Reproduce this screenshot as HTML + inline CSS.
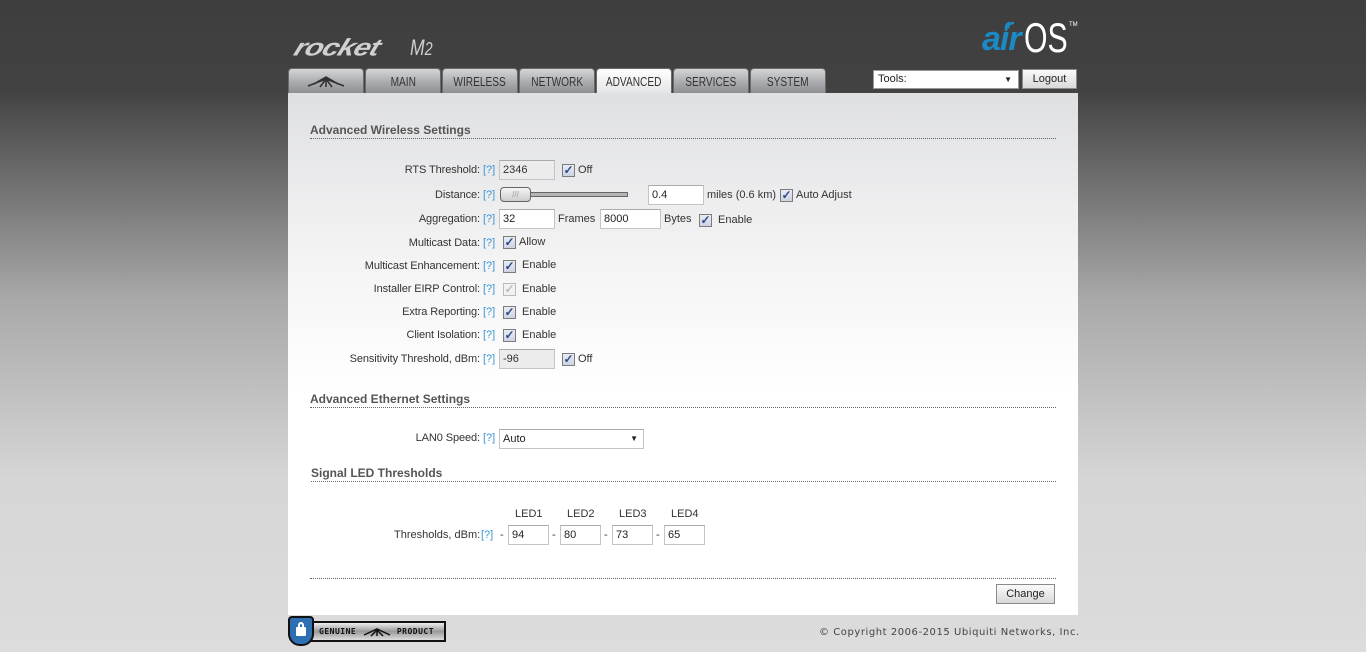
<!DOCTYPE html>
<html><head><meta charset="utf-8"><style>
*{margin:0;padding:0;box-sizing:border-box}
html,body{width:1366px;height:652px;overflow:hidden}
body{background:linear-gradient(#3e3e3e 0,#424242 90px,#a9a9a9 300px,#d6d6d6 480px,#dcdcdc 652px);font-family:"Liberation Sans",Arial,sans-serif;font-size:11px;color:#333;position:relative}
.a{position:absolute;white-space:nowrap}
.panel{position:absolute;left:288px;top:93px;width:790px;height:522px;background:linear-gradient(#dfe0e2 0,#f2f2f3 150px,#fff 300px,#fff)}
.tab{position:absolute;top:68px;height:25px;width:76px;border-radius:4px 4px 0 0;background:linear-gradient(#d4d5d7,#a7a8ab 60%,#8f9093);border:1px solid #6a6a6a;border-bottom:none;text-align:center;font-size:13px;line-height:25px;color:#333}
.tab span{display:inline-block;transform:scaleX(.78)}
.tab.on{background:linear-gradient(#fff,#e3e4e6);color:#333;height:26px}
.lbl{position:absolute;left:0;width:480px;text-align:right;color:#333;line-height:14px;letter-spacing:-.1px}
.q{position:absolute;left:483px;color:#3a95d3;line-height:14px}
.in{position:absolute;height:20px;border:1px solid #c4c4c4;border-top-color:#aaa;background:#fff;padding-left:3px;line-height:18px;color:#222}
.in.dis{background:#ececec;color:#333}
.cb{position:absolute;width:13px;height:13px;border:1px solid #7c7c7c;background:linear-gradient(#e9ecf4,#cdd3e3);color:#2d4a8a;font-size:12px;line-height:11px;text-align:center;font-weight:bold}
.cb.d{border-color:#bbb;background:#f2f2f2;color:#bbb}
.h{position:absolute;left:310px;width:746px;font-weight:bold;font-size:12px;color:#555;border-bottom:1px dotted #666;padding-bottom:1px;line-height:14px}
.t{position:absolute;line-height:14px;color:#333}
.btn{position:absolute;border:1px solid #8a8a8a;background:linear-gradient(#fafafa,#d9d9d9);text-align:center;color:#222}
</style></head><body>
<div class="a" style="left:290px;top:28px;font:italic bold 30px 'Liberation Sans',sans-serif;color:#d0d0d0;letter-spacing:-1px;transform:skewX(-20deg) scaleY(.8);transform-origin:left bottom">rocket</div>
<div class="a" style="left:410px;top:35px;font:italic 22px 'Liberation Sans',sans-serif;color:#cfcfcf;transform:scaleX(.8);transform-origin:left">M<span style="font-size:18px">2</span></div>
<div class="a" style="left:982px;top:20px;font:italic bold 34px 'Liberation Sans',sans-serif;color:#1b8ac4;letter-spacing:-1px">air</div>
<div class="a" style="left:1024px;top:14px;font:42px 'Liberation Sans',sans-serif;color:#fff;transform:scaleX(.72);transform-origin:left">OS</div>
<div class="a" style="left:1069px;top:22px;font-size:6px;color:#fff">TM</div>
<svg class="a" style="left:1004px;top:14px" width="20" height="20"><path d="M2 17 A8 8 0 0 1 10 9 M2 13 A4 4 0 0 1 6 9" stroke="#1b8ac4" stroke-width="2.5" fill="none"/></svg>
<div class="tab" style="left:288px"><svg width="40" height="14" style="margin-top:6px"><path d="M2 11 L20 4 L38 11 M8 9 L20 2 L32 9 M20 2 L20 12 M14 12 L20 4 L26 12" stroke="#333" stroke-width="1.6" fill="none"/></svg></div>
<div class="tab" style="left:365px"><span>MAIN</span></div>
<div class="tab" style="left:442px"><span>WIRELESS</span></div>
<div class="tab" style="left:519px"><span>NETWORK</span></div>
<div class="tab on" style="left:596px"><span>ADVANCED</span></div>
<div class="tab" style="left:673px"><span>SERVICES</span></div>
<div class="tab" style="left:750px"><span>SYSTEM</span></div>
<div class="a" style="left:873px;top:70px;width:146px;height:19px;background:#fff;border:1px solid #999;padding-left:4px;line-height:17px;color:#222">Tools:<span style="position:absolute;right:6px;top:0;font-size:8px">▼</span></div>
<div class="btn" style="left:1022px;top:69px;width:55px;height:20px;line-height:18px">Logout</div>
<div class="panel"></div>
<div class="h" style="top:123px">Advanced Wireless Settings</div>

<div class="lbl" style="top:163px">RTS Threshold:</div><div class="q" style="top:163px">[?]</div>
<div class="in dis" style="left:499px;top:160px;width:56px">2346</div>
<div class="cb" style="left:562px;top:164px">✓</div><div class="t" style="left:578px;top:163px">Off</div>

<div class="lbl" style="top:188px">Distance:</div><div class="q" style="top:188px">[?]</div>
<div class="a" style="left:528px;top:192px;width:100px;height:5px;background:#b5b5b5;border:1px solid #666"></div>
<div class="a" style="left:500px;top:187px;width:31px;height:15px;border:1px solid #666;border-radius:4px;background:linear-gradient(#f5f5f5,#ccc);font-size:8px;color:#999;text-align:center;line-height:13px">///</div>
<div class="in" style="left:648px;top:185px;width:56px">0.4</div>
<div class="t" style="left:707px;top:188px">miles (0.6 km)</div>
<div class="cb" style="left:780px;top:189px">✓</div><div class="t" style="left:796px;top:188px">Auto Adjust</div>

<div class="lbl" style="top:212px">Aggregation:</div><div class="q" style="top:212px">[?]</div>
<div class="in" style="left:499px;top:209px;width:56px">32</div>
<div class="t" style="left:558px;top:212px">Frames</div>
<div class="in" style="left:600px;top:209px;width:61px">8000</div>
<div class="t" style="left:664px;top:212px">Bytes</div>
<div class="cb" style="left:699px;top:214px">✓</div><div class="t" style="left:718px;top:213px">Enable</div>

<div class="lbl" style="top:236px">Multicast Data:</div><div class="q" style="top:236px">[?]</div>
<div class="cb" style="left:503px;top:236px">✓</div><div class="t" style="left:519px;top:235px">Allow</div>

<div class="lbl" style="top:259px">Multicast Enhancement:</div><div class="q" style="top:259px">[?]</div>
<div class="cb" style="left:503px;top:260px">✓</div><div class="t" style="left:522px;top:258px">Enable</div>

<div class="lbl" style="top:282px">Installer EIRP Control:</div><div class="q" style="top:282px">[?]</div>
<div class="cb d" style="left:503px;top:283px">✓</div><div class="t" style="left:522px;top:282px">Enable</div>

<div class="lbl" style="top:305px">Extra Reporting:</div><div class="q" style="top:305px">[?]</div>
<div class="cb" style="left:503px;top:306px">✓</div><div class="t" style="left:522px;top:305px">Enable</div>

<div class="lbl" style="top:328px">Client Isolation:</div><div class="q" style="top:328px">[?]</div>
<div class="cb" style="left:503px;top:329px">✓</div><div class="t" style="left:522px;top:328px">Enable</div>

<div class="lbl" style="top:352px">Sensitivity Threshold, dBm:</div><div class="q" style="top:352px">[?]</div>
<div class="in dis" style="left:499px;top:349px;width:56px">-96</div>
<div class="cb" style="left:562px;top:353px">✓</div><div class="t" style="left:578px;top:352px">Off</div>

<div class="h" style="top:392px">Advanced Ethernet Settings</div>
<div class="lbl" style="top:431px">LAN0 Speed:</div><div class="q" style="top:431px">[?]</div>
<div class="in" style="left:499px;top:429px;width:145px">Auto<span style="position:absolute;right:5px;top:0;font-size:8px">▼</span></div>

<div class="h" style="top:466px;left:311px;width:745px">Signal LED Thresholds</div>
<div class="t" style="left:515px;top:507px">LED1</div>
<div class="t" style="left:567px;top:507px">LED2</div>
<div class="t" style="left:619px;top:507px">LED3</div>
<div class="t" style="left:671px;top:507px">LED4</div>
<div class="t" style="left:394px;top:528px">Thresholds, dBm:</div><div class="q" style="left:481px;top:528px">[?]</div>
<div class="t" style="left:500px;top:528px">-</div><div class="in" style="left:508px;top:525px;width:41px">94</div>
<div class="t" style="left:552px;top:528px">-</div><div class="in" style="left:560px;top:525px;width:41px">80</div>
<div class="t" style="left:604px;top:528px">-</div><div class="in" style="left:612px;top:525px;width:41px">73</div>
<div class="t" style="left:656px;top:528px">-</div><div class="in" style="left:664px;top:525px;width:41px">65</div>

<div class="a" style="left:310px;top:578px;width:746px;border-top:1px dotted #666"></div>
<div class="btn" style="left:996px;top:584px;width:59px;height:20px;line-height:18px">Change</div>

<div class="a" style="left:305px;top:621px;width:141px;height:21px;background:linear-gradient(#eee,#999 50%,#ddd);border:2px solid #111;font:bold 8px 'DejaVu Sans Mono',monospace;color:#111;line-height:17px;padding-left:12px;letter-spacing:.5px">GENUINE <svg width="30" height="10" style="vertical-align:middle"><path d="M2 8 L15 2 L28 8 M15 2 L15 9 M9 9 L15 3 L21 9" stroke="#111" stroke-width="1.5" fill="none"/></svg> PRODUCT</div>
<div class="a" style="left:288px;top:616px;width:26px;height:30px;background:#2d6fb0;border:2px solid #111;border-radius:4px 4px 12px 12px"></div>
<div class="a" style="left:296px;top:627px;width:10px;height:9px;background:#fff;border-radius:1px"></div>
<div class="a" style="left:298px;top:622px;width:6px;height:7px;border:2px solid #fff;border-bottom:none;border-radius:3px 3px 0 0"></div>
<div class="a" style="left:819px;top:627px;font:10px 'DejaVu Sans',sans-serif;color:#444;letter-spacing:.55px">© Copyright 2006-2015 Ubiquiti Networks, Inc.</div>
</body></html>
